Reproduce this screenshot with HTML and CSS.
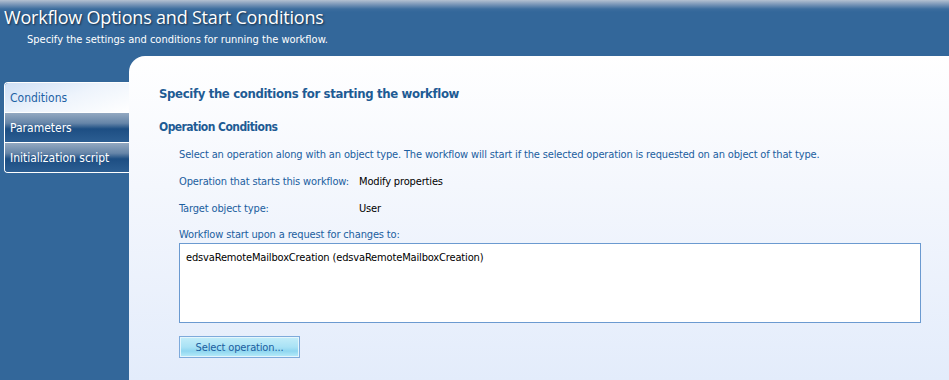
FILE: index.html
```html
<!DOCTYPE html>
<html lang="en">
<head>
  <meta charset="UTF-8">
  <title>Workflow Options and Start Conditions</title>
  <link rel="stylesheet" href="styles.css">
</head>
<body>
  <div class="header">
    <h1>Workflow Options and Start Conditions</h1>
    <p class="subtitle">Specify the settings and conditions for running the workflow.</p>
  </div>
  <div class="main">
    <div class="sidebar">
      <div class="tabs">
        <div class="tab active">Conditions</div>
        <div class="tab">Parameters</div>
        <div class="tab">Initialization script</div>
      </div>
    </div>
    <div class="panel">
      <h2>Specify the conditions for starting the workflow</h2>
      <h3>Operation Conditions</h3>
      <div class="section">
        <p class="note">Select an operation along with an object type. The workflow will start if the selected operation is requested on an object of that type.</p>
        <div class="row">
          <span class="label">Operation that starts this workflow:</span>
          <span class="value">Modify properties</span>
        </div>
        <div class="row">
          <span class="label">Target object type:</span>
          <span class="value">User</span>
        </div>
        <p class="note list-title">Workflow start upon a request for changes to:</p>
        <div class="list">edsvaRemoteMailboxCreation (edsvaRemoteMailboxCreation)</div>
        <button class="select-btn">Select operation...</button>
      </div>
    </div>
  </div>
</body>
</html>
```

FILE: styles.css
```css
html, body {
  height: 100%;
}
body {
  margin: 0;
  font-family: "DejaVu Sans Condensed", "DejaVu Sans", sans-serif;
  font-size: 11px;
  background-color: #33679a;
  display: flex;
  flex-direction: column;
  overflow: hidden;
}
.header {
  height: 56px;
  box-sizing: border-box;
  padding: 5px 0 0 4px;
  background: linear-gradient(to bottom, #b4c1d1 0px, #7f9aba 4px, #3c6d9e 9px, #33679a 12px);
  color: white;
}
.header h1 {
  margin: 0;
  font-family: "Open Sans", sans-serif;
  font-weight: normal;
  font-size: 18px;
  line-height: 24px;
  letter-spacing: -0.2px;
  text-shadow: 1px 1px 2px rgba(0, 0, 0, 0.55);
}
.subtitle {
  margin: 4px 0 0 23px;
  font-size: 11px;
}
.main {
  flex: 1;
  display: flex;
}
.sidebar {
  width: 129px;
  padding-top: 26px;
  box-sizing: border-box;
}
.tabs {
  margin-left: 4px;
  border: 1px solid #ffffff;
  border-right: none;
  border-radius: 4px 0 0 4px;
  overflow: hidden;
}
.tab {
  height: 29px;
  line-height: 30px;
  padding-left: 5px;
  color: white;
  font-size: 12px;
  background: linear-gradient(to bottom, #93a9c1 0%, #6685a8 35%, #1d4e83 55%, #2c5e92 100%);
  border-top: 1px solid #ffffff;
}
.tab:first-child {
  border-top: none;
}
.tab.active {
  color: #1e62a5;
  background: linear-gradient(160deg, #cfe0f6 0%, #eef4fc 50%, #ffffff 100%);
}
.panel {
  flex: 1;
  background: linear-gradient(to bottom, #ffffff 0%, #f4f7fd 40%, #e3ecfb 100%);
  border-top-left-radius: 16px;
  padding: 30px 28px 0 30px;
  color: #1b5e9f;
  letter-spacing: -0.15px;
}
.panel h2 {
  margin: 0;
  font-size: 13px;
  font-weight: bold;
  letter-spacing: -0.35px;
  color: #1e5b94;
}
.panel h3 {
  margin: 19px 0 0 0;
  font-size: 12px;
  font-weight: bold;
  letter-spacing: -0.55px;
  color: #1e5b94;
}
.section {
  padding-left: 20px;
}
.note {
  margin: 14px 0 0 0;
  line-height: 14px;
}
.row {
  display: flex;
  margin-top: 13px;
  line-height: 14px;
}
.label {
  width: 180px;
}
.value {
  color: #000000;
}
.list-title {
  margin-top: 12px;
}
.list {
  margin-top: 1px;
  height: 80px;
  box-sizing: border-box;
  border: 1px solid #6b9ad0;
  background: #ffffff;
  color: #000000;
  padding: 7px 6px;
}
.select-btn {
  margin-top: 13px;
  width: 121px;
  height: 22px;
  padding: 0;
  font-family: inherit;
  font-size: 11px;
  letter-spacing: -0.15px;
  color: #1b5e9f;
  border: 1px solid #7eaadb;
  box-shadow: inset 0 0 0 1px #e4f6fd;
  background: linear-gradient(to bottom, #c4edf9 0%, #a9e2f5 50%, #8fd6f0 70%, #b7ecfa 100%);
}
```
